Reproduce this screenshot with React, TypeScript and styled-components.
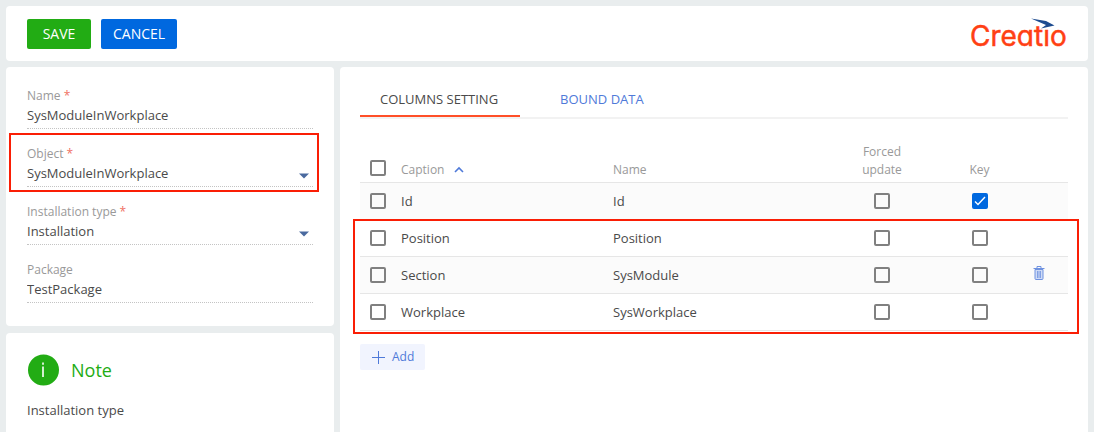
import React from 'react';
import styled, { createGlobalStyle, css } from 'styled-components';

const GlobalStyle = createGlobalStyle`
  * { box-sizing: border-box; }
  body {
    margin: 0;
    background: #e9edee;
    color: #4a4a4a;
    font-family: "Open Sans", "Noto Sans", sans-serif;
    font-size: 13px;
    line-height: 20px;
    overflow: hidden;
  }
  button, input, select { font: inherit; color: inherit; }
`;

const Page = styled.div`
  display: flex;
  flex-direction: column;
  gap: 6px;
  min-height: 100vh;
  padding: 6px 6px 0;
`;

const Panel = styled.section`
  background: #fff;
  border-radius: 4px;
`;

const Toolbar = styled.header`
  display: flex;
  align-items: center;
  gap: 10px;
  height: 55px;
  padding: 0 20px 0 21px;
  background: #fff;
  border-radius: 4px;
`;

const ActionButton = styled.button<{ $color: string }>`
  height: 30px;
  padding: 0 12px;
  min-width: 64px;
  border: 0;
  border-radius: 2px;
  background: ${(p) => p.$color};
  color: #fff;
  font-size: 14px;
`;

const Logo = styled.svg`
  margin-left: auto;
`;

const Wordmark = styled.text`
  fill: #ff4013;
  stroke: #ff4013;
  stroke-width: 0.5px;
  font-family: Inter, Lato, sans-serif;
  font-size: 28px;
  font-feature-settings: "cv11";
`;

const Columns = styled.div`
  display: flex;
  flex: 1;
  gap: 6px;
`;

const Sidebar = styled.aside`
  display: flex;
  flex-direction: column;
  gap: 7px;
  width: 328px;
  flex: none;
`;

const FieldsPanel = styled(Panel)`
  display: flex;
  flex-direction: column;
  gap: 16px;
  padding: 20px 21px 23px;
`;

const highlight = css`
  &::after {
    content: "";
    position: absolute;
    border: 2px solid #fa1e05;
    pointer-events: none;
  }
`;

const Field = styled.div<{ $marked?: boolean }>`
  position: relative;
  border-bottom: 1px dotted #c4c4c4;
  padding-bottom: 3px;
  ${(p) => p.$marked && highlight}
  &::after { inset: -12px -6px -6px -18px; }
`;

const FieldLabel = styled.label`
  display: block;
  color: #999;
  font-size: 12px;
  line-height: 17px;
`;

const Required = styled.span`
  color: #ef7063;
`;

const ValueRow = styled.div`
  display: flex;
  align-items: center;
  height: 21px;
  padding-right: 4px;
`;

const TextInput = styled.input`
  flex: 1;
  min-width: 0;
  height: 21px;
  padding: 0;
  border: 0;
  outline: 0;
  background: none;
`;

const Select = styled.select`
  flex: 1;
  min-width: 0;
  height: 21px;
  padding: 0;
  border: 0;
  outline: 0;
  background: none;
  appearance: none;
`;

const ArrowIcon = styled.svg`
  align-self: flex-end;
  margin-bottom: 4px;
`;

const NotePanel = styled(Panel)`
  flex: 1;
  padding: 21px;
`;

const NoteHead = styled.div`
  display: flex;
  align-items: center;
  gap: 12px;
  height: 32px;
`;

const NoteTitle = styled.h2`
  margin: 0;
  color: #22ac14;
  font-size: 18px;
  font-weight: 400;
`;

const NoteText = styled.p`
  margin: 14px 0 0;
`;

const Main = styled(Panel)`
  flex: 1;
  min-width: 0;
  padding: 16px 20px;
`;

const Tabs = styled.nav`
  display: flex;
  gap: 20px;
  height: 36px;
  border-bottom: 2px solid #f2f2f2;
`;

const Tab = styled.button<{ $active?: boolean }>`
  min-width: 122px;
  height: 34px;
  padding: 0 22px 0 20px;
  border: 0;
  border-bottom: 2px solid ${(p) => (p.$active ? '#ff4f28' : 'transparent')};
  background: none;
  color: ${(p) => (p.$active ? '#4a4a4a' : '#4f7ad9')};
  text-align: left;
`;

const Table = styled.table`
  width: 100%;
  margin-top: 23px;
  border-collapse: separate;
  border-spacing: 0;
  table-layout: fixed;
`;

const HeadCell = styled.th<{ $width?: string; $center?: boolean }>`
  width: ${(p) => p.$width};
  height: 41px;
  padding: 0 0 3px;
  border-bottom: 1px solid #e6e6e6;
  color: #999;
  font-size: 12px;
  font-weight: 400;
  line-height: 18px;
  text-align: ${(p) => (p.$center ? 'center' : 'left')};
  vertical-align: bottom;
`;

const CheckHead = styled(HeadCell)`
  padding-left: 10px;
`;

const Group = styled.tbody<{ $marked?: boolean }>`
  position: relative;
  ${(p) => p.$marked && highlight}
  &::after { inset: -1px -11px -3px -7px; }
`;

const Row = styled.tr<{ $shaded?: boolean }>`
  background: ${(p) => (p.$shaded ? '#fbfbfb' : '#fff')};
`;

const Cell = styled.td<{ $center?: boolean }>`
  height: 37px;
  padding: 0;
  border-bottom: 1px solid #e6e6e6;
  text-align: ${(p) => (p.$center ? 'center' : 'left')};
  vertical-align: middle;
`;

const CheckCell = styled(Cell)`
  padding-left: 10px;
`;

const Checkbox = styled.input`
  display: inline-block;
  width: 16px;
  height: 16px;
  margin: 0 0 3px;
  border: 2px solid #808080;
  border-radius: 2px;
  appearance: none;
  vertical-align: middle;
  &:checked {
    border-color: #0068df;
    background: #0068df url("data:image/svg+xml,%3Csvg xmlns='http://www.w3.org/2000/svg' viewBox='0 0 12 12' fill='none' stroke='white' stroke-width='1.4'%3E%3Cpath d='M1 6.5l3 3 7-7.5'/%3E%3C/svg%3E") center / 12px no-repeat;
  }
`;

const SortIcon = styled.svg`
  margin-left: 10px;
  vertical-align: 1px;
`;

const IconButton = styled.button`
  display: block;
  margin-left: 5px;
  padding: 0;
  border: 0;
  background: none;
`;

const AddButton = styled.button`
  display: flex;
  align-items: center;
  gap: 7px;
  height: 26px;
  margin-top: 13px;
  padding: 0 11px 0 12px;
  border: 0;
  border-radius: 2px;
  background: #f1f4fe;
  color: #4f7ad9;
  font-size: 12px;
`;

const DropArrow = () => (
  <ArrowIcon width="10" height="6" viewBox="0 0 10 6" aria-hidden="true">
    <path d="M0 .5h10L5 5.5z" fill="#4a6a9f" />
  </ArrowIcon>
);

type FieldProps = { id: string; label: string; value: string; required?: boolean; select?: boolean; marked?: boolean };

const FormField = ({ id, label, value, required, select, marked }: FieldProps) => (
  <Field $marked={marked}>
    <FieldLabel htmlFor={id}>
      {label} {required && <Required>*</Required>}
    </FieldLabel>
    <ValueRow>
      {select ? (
        <>
          <Select id={id} defaultValue={value}><option>{value}</option></Select>
          <DropArrow />
        </>
      ) : (
        <TextInput id={id} defaultValue={value} />
      )}
    </ValueRow>
  </Field>
);

type Column = { caption: string; name: string; key?: boolean; removable?: boolean; shaded?: boolean };

const baseColumns: Column[] = [{ caption: 'Id', name: 'Id', key: true, shaded: true }];
const moduleColumns: Column[] = [
  { caption: 'Position', name: 'Position' },
  { caption: 'Section', name: 'SysModule', removable: true, shaded: true },
  { caption: 'Workplace', name: 'SysWorkplace' },
];

const ColumnRow = ({ column }: { column: Column }) => (
  <Row $shaded={column.shaded}>
    <CheckCell><Checkbox type="checkbox" aria-label={`Select ${column.caption}`} /></CheckCell>
    <Cell>{column.caption}</Cell>
    <Cell>{column.name}</Cell>
    <Cell $center><Checkbox type="checkbox" aria-label="Forced update" /></Cell>
    <Cell $center><Checkbox type="checkbox" aria-label="Key" defaultChecked={column.key} /></Cell>
    <Cell>
      {column.removable && (
        <IconButton aria-label="Delete">
          <svg width="12" height="15" viewBox="0 0 12 15" fill="none" stroke="#6f92e0">
            <path d="M2 4.5h8v9a1 1 0 0 1-1 1H3a1 1 0 0 1-1-1z" fill="#cfdbf6" />
            <path d="M.5 3.5h11M4 3V1.5h4V3" />
            <path d="M4.5 6v7M7.5 6v7M6 6v7" strokeWidth=".8" />
          </svg>
        </IconButton>
      )}
    </Cell>
  </Row>
);

export default function App() {
  return (
    <>
      <GlobalStyle />
      <Page>
        <Toolbar>
          <ActionButton $color="#22ac14">SAVE</ActionButton>
          <ActionButton $color="#0068df">CANCEL</ActionButton>
          <Logo width="98" height="36" viewBox="0 0 98 36" role="img" aria-label="Creatio">
            <Wordmark x="0" y="30">Creatio</Wordmark>
            <path d="M71 5h16v8H71z" fill="#fff" />
            <path d="M61 2.500L76 5l8.500 4.500L71 12.500l5-3.500z" fill="#1d4b8f" />
          </Logo>
        </Toolbar>
        <Columns>
          <Sidebar>
            <FieldsPanel>
              <FormField id="name" label="Name" value="SysModuleInWorkplace" required />
              <FormField id="object" label="Object" value="SysModuleInWorkplace" required select marked />
              <FormField id="type" label="Installation type" value="Installation" required select />
              <FormField id="package" label="Package" value="TestPackage" />
            </FieldsPanel>
            <NotePanel>
              <NoteHead>
                <svg width="32" height="32" viewBox="0 0 32 32" aria-hidden="true">
                  <circle cx="16.500" cy="16" r="15.500" fill="#22ac14" />
                  <path d="M16 12.500V23M16 8.500v2.300" stroke="#fff" strokeWidth="1.600" />
                </svg>
                <NoteTitle>Note</NoteTitle>
              </NoteHead>
              <NoteText>Installation type</NoteText>
            </NotePanel>
          </Sidebar>
          <Main>
            <Tabs>
              <Tab $active>COLUMNS SETTING</Tab>
              <Tab>BOUND DATA</Tab>
            </Tabs>
            <Table>
              <thead>
                <tr>
                  <CheckHead $width="41px"><Checkbox type="checkbox" aria-label="Select all" /></CheckHead>
                  <HeadCell $width="212px">
                    Caption
                    <SortIcon width="10" height="7" viewBox="0 0 10 7" fill="none" stroke="#4f7ad9" strokeWidth="1.6">
                      <path d="M1 6l4-4 4 4" />
                    </SortIcon>
                  </HeadCell>
                  <HeadCell>Name</HeadCell>
                  <HeadCell $width="98px" $center>Forced<br />update</HeadCell>
                  <HeadCell $width="97px" $center>Key</HeadCell>
                  <HeadCell $width="40px" />
                </tr>
              </thead>
              <Group>
                {baseColumns.map((c) => <ColumnRow key={c.caption} column={c} />)}
              </Group>
              <Group $marked>
                {moduleColumns.map((c) => <ColumnRow key={c.caption} column={c} />)}
              </Group>
            </Table>
            <AddButton>
              <svg width="13" height="13" viewBox="0 0 13 13" stroke="#4f7ad9" aria-hidden="true">
                <path d="M6.500 0v13M0 6.500h13" />
              </svg>
              Add
            </AddButton>
          </Main>
        </Columns>
      </Page>
    </>
  );
}
